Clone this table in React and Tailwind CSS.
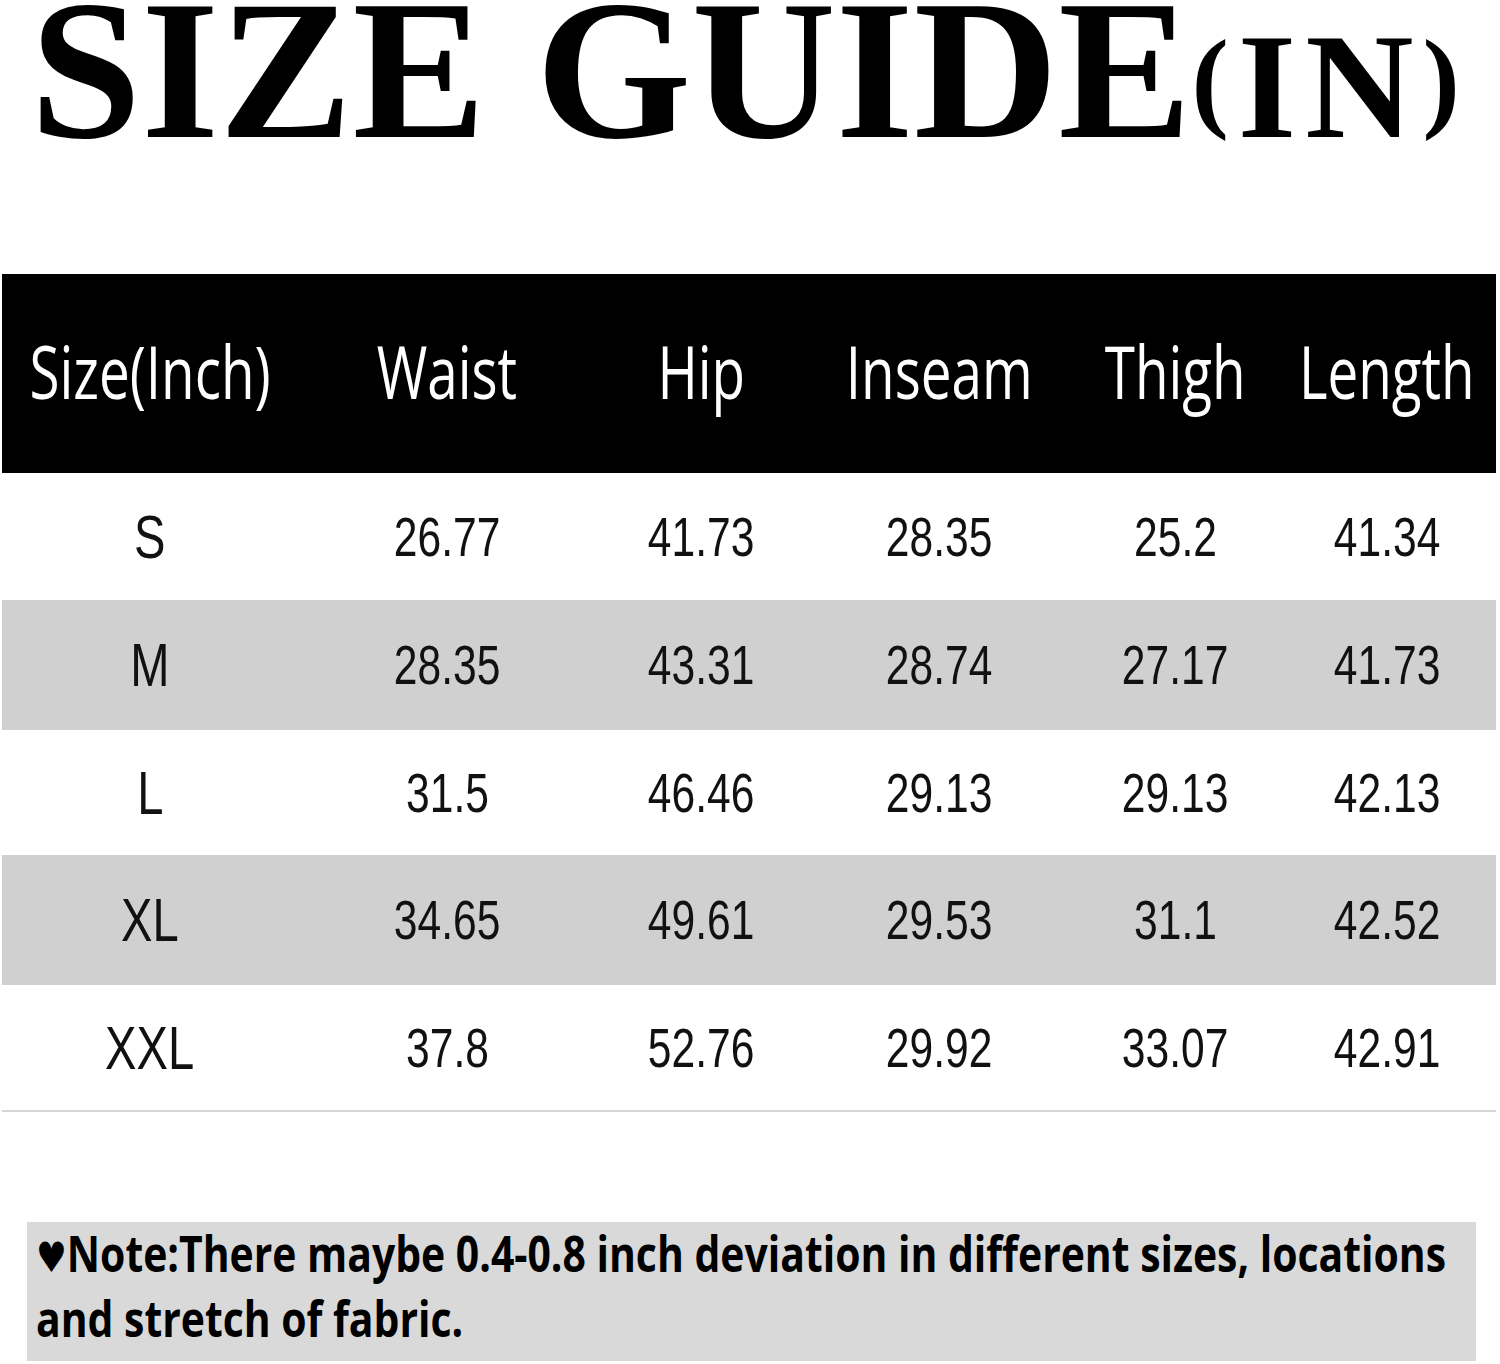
import React from "react";

const cols = "grid grid-cols-[296px_298px_210px_266px_206px_218px]";

const headers = ["Size(Inch)", "Waist", "Hip", "Inseam", "Thigh", "Length"];

const rows = [
  { s: "S", v: ["26.77", "41.73", "28.35", "25.2", "41.34"], h: "h-[127px]", bg: "bg-white" },
  { s: "M", v: ["28.35", "43.31", "28.74", "27.17", "41.73"], h: "h-[130px]", bg: "bg-[#d0d0d0]" },
  { s: "L", v: ["31.5", "46.46", "29.13", "29.13", "42.13"], h: "h-[125px]", bg: "bg-white" },
  { s: "XL", v: ["34.65", "49.61", "29.53", "31.1", "42.52"], h: "h-[130px]", bg: "bg-[#d0d0d0]" },
  { s: "XXL", v: ["37.8", "52.76", "29.92", "33.07", "42.91"], h: "h-[125px]", bg: "bg-white" },
];

export default function App() {
  return (
    <div className="w-[1500px] h-[1364px] bg-white overflow-hidden">
      {/* Title */}
      <div
        className="pl-[30px] h-[140px] leading-[140px] text-[200px] font-bold text-black whitespace-nowrap"
        style={{ fontFamily: '"Liberation Serif", "Times New Roman", serif' }}
      >
        SIZE GUIDE
        <span className="text-[150px] tracking-[9px]">
          <span className="text-[112px] align-[20px]">(</span>IN<span className="text-[112px] align-[20px]">)</span>
        </span>
      </div>

      {/* Table */}
      <div className="mt-[134px] ml-[2px] w-[1494px]">
        <div className={`${cols} h-[199px] bg-black text-white`}>
          {headers.map((h) => (
            <div key={h} className="flex items-center justify-center pb-[6px]">
              <span
                className="inline-block scale-x-[0.74] text-[74px] leading-none whitespace-nowrap"
                style={{ fontFamily: '"Open Sans", "Noto Sans", sans-serif' }}
              >
                {h}
              </span>
            </div>
          ))}
        </div>
        {rows.map((r) => (
          <div key={r.s} className={`${cols} ${r.h} ${r.bg} text-[#111]`}>
            <div className="flex items-center justify-center">
              <span
                className="inline-block scale-x-[0.76] text-[62px] leading-none"
                style={{ fontFamily: '"Liberation Sans", Arial, sans-serif' }}
              >
                {r.s}
              </span>
            </div>
            {r.v.map((v, i) => (
              <div key={i} className="flex items-center justify-center">
                <span
                  className="inline-block scale-x-[0.76] text-[56px] leading-none"
                  style={{ fontFamily: '"Liberation Sans", Arial, sans-serif' }}
                >
                  {v}
                </span>
              </div>
            ))}
          </div>
        ))}
        <div className="h-[2px] bg-[#d6d6d6]" />
      </div>

      {/* Note */}
      <div className="mt-[110px] ml-[27px] w-[1449px] h-[139px] bg-[#d9d9d9] pl-[9px]">
        <div
          className="origin-left scale-x-[0.818] w-max text-[50px] leading-[62px] font-bold text-black whitespace-nowrap"
          style={{ fontFamily: '"Open Sans", "Noto Sans", "DejaVu Sans", sans-serif' }}
        >
          <span className="text-[42px]">♥</span>Note:There maybe 0.4-0.8 inch deviation in different sizes, locations
          <br />
          and stretch of fabric.
        </div>
      </div>
    </div>
  );
}
